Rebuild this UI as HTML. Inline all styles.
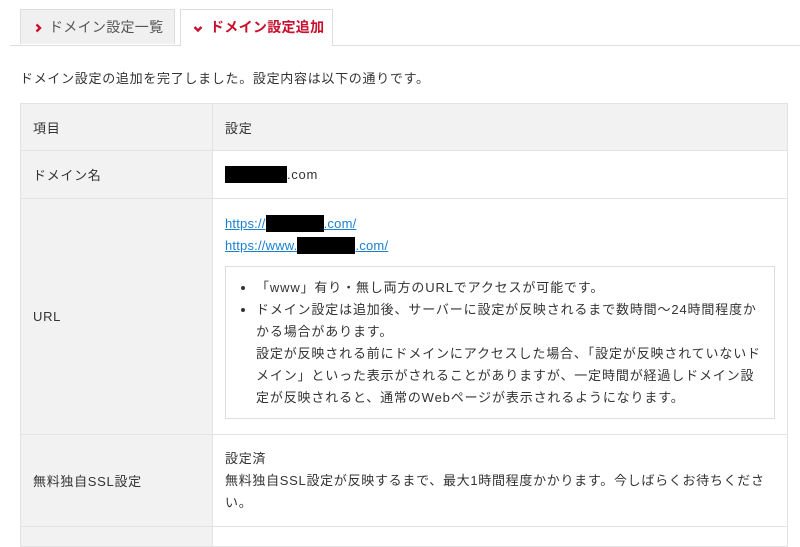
<!DOCTYPE html>
<html><head><meta charset="utf-8"><style>
body{margin:0;background:#fff;width:800px;height:532px;overflow:hidden;font-family:"Liberation Sans","Noto Sans CJK JP",sans-serif;color:#333;font-size:13px;letter-spacing:0.7px}
.tabs{position:absolute;top:9px;left:10px;right:0;height:36px;border-bottom:1px solid #ddd}
.tab{position:absolute;top:0;height:35px;border:1px solid #ddd;border-bottom:none;line-height:35px;font-size:14px;box-sizing:border-box;letter-spacing:0.3px}
.t1{left:10px;width:155px;background:#f0f0f0;color:#555;padding-left:14px}
.t2{left:170px;width:153px;background:#fff;height:37px;color:#c8102e;font-weight:bold;padding-left:12px}
.ic{display:inline-block;vertical-align:-1px;margin-right:7px}
.msg{position:absolute;top:68px;left:20px;font-size:13px}
table{position:absolute;top:103px;left:20px;width:768px;border-collapse:collapse}
td{border:1px solid #e3e3e3;vertical-align:middle;padding:0 12px}
td.h{background:#f2f2f2;width:167px}
tr.hd td{background:#f2f2f2;height:46px}
a{color:#1a7fd0;text-decoration:underline;letter-spacing:0.2px}
.blk{display:inline-block;background:#000;width:62px;height:17px;vertical-align:-4px}
.box{border:1px solid #ddd;margin:9px 0 13px;padding:10px 12px 9px 0;letter-spacing:0.85px}
ul{margin:0;padding-left:30px;line-height:22px}
</style></head><body>
<div class="tabs">
<div class="tab t1"><svg class="ic" width="7" height="10" viewBox="0 0 7 10"><path d="M1.5 1.5L5 5L1.5 8.5" fill="none" stroke="#c8102e" stroke-width="2.4"/></svg>ドメイン設定一覧</div>
<div class="tab t2"><svg class="ic" width="10" height="8" viewBox="0 0 10 8"><path d="M1.5 2L5 5.5L8.5 2" fill="none" stroke="#c8102e" stroke-width="2.4"/></svg>ドメイン設定追加</div>
</div>
<div class="msg">ドメイン設定の追加を完了しました。設定内容は以下の通りです。</div>
<table>
<tr class="hd"><td class="h">項目</td><td>設定</td></tr>
<tr style="height:48px"><td class="h">ドメイン名</td><td><span class="blk"></span>.com</td></tr>
<tr style="height:236px"><td class="h">URL</td><td style="padding-top:14px;vertical-align:top;line-height:22px">
<a>https://<span class="blk" style="width:58px"></span>.com/</a><br>
<a>https://www.<span class="blk" style="width:58px"></span>.com/</a>
<div class="box"><ul>
<li>「www」有り・無し両方のURLでアクセスが可能です。</li>
<li>ドメイン設定は追加後、サーバーに設定が反映されるまで数時間～24時間程度かかる場合があります。<br>設定が反映される前にドメインにアクセスした場合、「設定が反映されていないドメイン」といった表示がされることがありますが、一定時間が経過しドメイン設定が反映されると、通常のWebページが表示されるようになります。</li>
</ul></div></td></tr>
<tr style="height:92px"><td class="h">無料独自SSL設定</td><td style="line-height:22px">設定済<br>無料独自SSL設定が反映するまで、最大1時間程度かかります。今しばらくお待ちください。</td></tr>
<tr style="height:20px"><td class="h"></td><td></td></tr>
</table>
</body></html>
